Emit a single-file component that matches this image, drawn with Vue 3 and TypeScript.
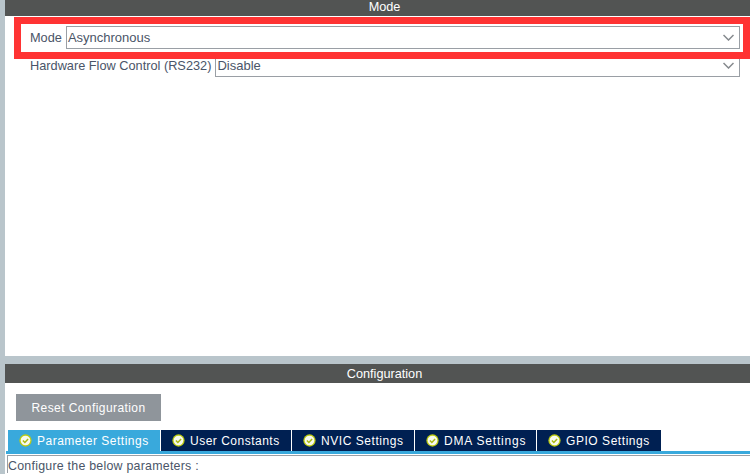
<template>
  <div class="page">
    <section class="mode-panel">
      <div class="panel-title">Mode</div>
      <div class="mode-body">
        <div class="field-row first">
          <span class="field-label">Mode</span>
          <div class="select">
            <span>Asynchronous</span>
            <svg class="chevron" viewBox="0 0 11 7"><path d="M.5 1l5 5 5-5" /></svg>
          </div>
        </div>
        <div class="field-row">
          <span class="field-label">Hardware Flow Control (RS232)</span>
          <div class="select">
            <span>Disable</span>
            <svg class="chevron" viewBox="0 0 11 7"><path d="M.5 1l5 5 5-5" /></svg>
          </div>
        </div>
        <div class="highlight"></div>
      </div>
    </section>

    <section class="config-panel">
      <div class="panel-title">Configuration</div>
      <button class="reset-btn">Reset Configuration</button>
      <div class="tabs">
        <div
          v-for="(tab, i) in tabs"
          :key="tab.label"
          class="tab"
          :class="{ active: i === 0 }"
          :style="{ width: tab.width + 'px', letterSpacing: tab.spacing + 'px' }"
        >
          <svg class="check" viewBox="0 0 14 14">
            <circle cx="7" cy="7" r="6.6" fill="#bccb12" />
            <circle cx="7" cy="7" r="5.2" fill="#f8faee" />
            <path d="M4.2 7l2.1 2.1 3.5-3.8" fill="none" stroke="#a9b912" stroke-width="1.6" />
          </svg>
          <span>{{ tab.label }}</span>
        </div>
      </div>
      <div class="tab-line"></div>
      <div class="tab-content">Configure the below parameters :</div>
    </section>
  </div>
</template>

<script setup lang="ts">
const tabs = [
  { label: 'Parameter Settings', width: 152, spacing: 0.5 },
  { label: 'User Constants', width: 131, spacing: 0.5 },
  { label: 'NVIC Settings', width: 123, spacing: 0.55 },
  { label: 'DMA Settings', width: 122, spacing: 0.8 },
  { label: 'GPIO Settings', width: 125, spacing: 0.55 }
]
</script>

<style>
html,
body {
  margin: 0;
  overflow: hidden;
}
</style>

<style scoped>
.page {
  width: 750px;
  height: 474px;
  box-sizing: border-box;
  padding-left: 5px;
  background: #b9c5cb;
  display: flex;
  flex-direction: column;
  gap: 8px;
  overflow: hidden;
  font-family: 'Liberation Sans', Arial, sans-serif;
  font-size: 12px;
  color: #4a5568;
}
.panel-title {
  height: 16px;
  line-height: 14px;
  padding-left: 14px;
  background: #525453;
  color: #fff;
  text-align: center;
  font-size: 12.7px;
}
.mode-panel {
  height: 356px;
  background: #fff;
}
.mode-body {
  position: relative;
  padding: 10px 10px 0 25px;
}
.field-row {
  display: flex;
  align-items: center;
  gap: 4px;
  height: 23px;
  margin-bottom: 5px;
}
.field-label {
  white-space: nowrap;
  font-size: 12.75px;
}
.select {
  flex: 1;
  height: 23px;
  box-sizing: border-box;
  border: 1px solid #9a9fa5;
  display: flex;
  align-items: center;
  justify-content: space-between;
  padding: 0 5px 0 1px;
  background: #fff;
  font-size: 13px;
}
.chevron {
  width: 11px;
  height: 7px;
}
.chevron path {
  fill: none;
  stroke: #85898d;
  stroke-width: 1.5;
}
.highlight {
  position: absolute;
  left: 9px;
  right: 0;
  top: 1px;
  height: 28px;
  border: 7px solid #ff3333;
  pointer-events: none;
}
.config-panel {
  flex: 1;
  background: #fff;
  min-height: 0;
}
.config-panel .panel-title {
  height: 19px;
  line-height: 20px;
}
.reset-btn {
  display: block;
  margin: 11px 0 0 11px;
  width: 145px;
  height: 27px;
  border: none;
  padding: 0;
  background: #8f959b;
  color: #fff;
  font-family: inherit;
  font-size: 12px;
  letter-spacing: 0.42px;
}
.tabs {
  display: flex;
  margin: 9px 0 0 3px;
  height: 21px;
}
.tab {
  display: flex;
  align-items: center;
  gap: 5px;
  box-sizing: border-box;
  padding: 0 0 0 11px;
  background: #002052;
  color: #fff;
  border-left: 1px solid #fff;
  white-space: nowrap;
}
.tab.active {
  background: #39a9dc;
  border-left: none;
}
.check {
  width: 13px;
  height: 13px;
  flex: none;
}
.tab-line {
  height: 3px;
  margin-left: 1px;
  background: #39a9dc;
}
.tab-content {
  margin: 1px 0 0 2px;
  padding: 3px 0 0 0;
  border-top: 1px solid #9a9fa5;
  border-left: 1px solid #9a9fa5;
  font-size: 12.4px;
  letter-spacing: 0.24px;
  line-height: 14px;
}
</style>
